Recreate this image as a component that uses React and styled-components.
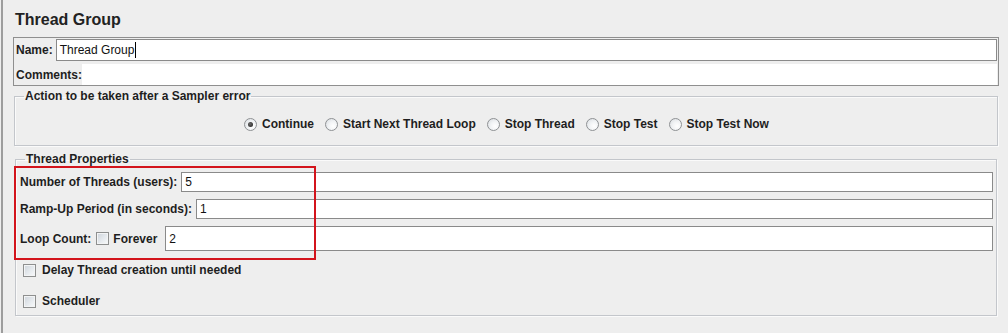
import React from 'react';
import styled, { createGlobalStyle } from 'styled-components';

const GlobalStyle = createGlobalStyle`
  html, body {
    margin: 0;
    height: 100%;
    background: #eeeeee;
  }
  body {
    font-family: "Liberation Sans", Arial, sans-serif;
    font-size: 12px;
    color: #1e1e1e;
  }
  #root { height: 100%; }
`;

const Page = styled.div`
  position: relative;
  box-sizing: border-box;
  height: 333px;
  margin-left: 1px;
  border-left: 2px solid #9d9d9d;
  padding: 10px 9px 0 10px;
  overflow: hidden;
`;

const Title = styled.h1`
  margin: 0 0 7px 2px;
  font-size: 16px;
  line-height: 20px;
  font-weight: 700;
  color: #222;
`;

const NameBox = styled.div`
  border: 1px solid #8f8f8f;
  padding: 1px 1px 0 1px;
  display: flex;
  flex-direction: column;
  gap: 3px;
`;

const Row = styled.div`
  display: flex;
  align-items: center;
  gap: ${p => p.$gap ?? 4}px;
  height: ${p => p.$h || 20}px;
`;

const Label = styled.span`
  font-weight: 700;
  white-space: nowrap;
  color: #1e1e1e;
  padding-left: ${p => p.$pad || 0}px;
`;

const Field = styled.div`
  flex: 1;
  align-self: stretch;
  box-sizing: border-box;
  display: flex;
  align-items: center;
  padding: 0 3px;
  margin-left: ${p => p.$offset || 0}px;
  background: #fff;
  border: ${p => (p.$bare ? 'none' : '1px solid #8a8a8a')};
  color: #111;
  white-space: nowrap;
`;

const Caret = styled.span`
  display: inline-block;
  width: 1px;
  height: 16px;
  margin-left: 1px;
  background: #000;
`;

const Group = styled.fieldset`
  margin: ${p => p.$top}px ${p => p.$side}px 0;
  padding: 0 3px 0 4px;
  border: 1px solid #c3c6cb;
  box-shadow: inset 1px 1px 0 #fafafa, 1px 1px 0 #fafafa;
  min-width: 0;
`;

const Legend = styled.legend`
  margin-left: 5px;
  padding: 0 1px;
  font-weight: 700;
  font-size: 12px;
  line-height: 14px;
  color: #1e1e1e;
`;

const RadioRow = styled.div`
  height: 42px;
  display: flex;
  align-items: center;
  justify-content: center;
  gap: 11px;
`;

const Choice = styled.label`
  display: flex;
  align-items: center;
  gap: ${p => p.$gap || 5}px;
  font-weight: 700;
  white-space: nowrap;
`;

const Radio = styled.span`
  position: relative;
  width: 13px;
  height: 13px;
  box-sizing: border-box;
  border-radius: 50%;
  border: 1px solid #8e9194;
  background: radial-gradient(circle at 65% 65%, #ffffff 0%, #f1f3f5 45%, #d6dade 100%);
  &::after {
    content: '';
    display: ${p => (p.$checked ? 'block' : 'none')};
    position: absolute;
    left: 3px;
    top: 3px;
    width: 5px;
    height: 5px;
    border-radius: 50%;
    background: radial-gradient(circle at 40% 40%, #6b6b6b, #1b1b1b);
  }
`;

const Check = styled.span`
  width: 13px;
  height: 13px;
  box-sizing: border-box;
  border: 1px solid #8e8f8f;
  box-shadow: inset 0 0 0 1px #f3f4f5;
  background: linear-gradient(135deg, #cdd3da 0%, #e6eaee 55%, #f9fafb 100%);
  flex-shrink: 0;
`;

const PropsBody = styled.div`
  display: flex;
  flex-direction: column;
  gap: 7px;
  padding-top: 6px;
`;

const Options = styled.div`
  display: flex;
  flex-direction: column;
  gap: 11px;
  margin-top: 9px;
  padding: 0 0 4px 3px;
`;

const OptionRow = styled.div`
  height: 20px;
  display: flex;
  align-items: center;
`;

const Highlight = styled.div`
  position: absolute;
  left: 11px;
  top: 166px;
  width: 302px;
  height: 94px;
  box-sizing: border-box;
  border: 2px solid #d3141c;
  pointer-events: none;
`;

const actions = ['Continue', 'Start Next Thread Loop', 'Stop Thread', 'Stop Test', 'Stop Test Now'];

export default function App() {
  return (
    <>
      <GlobalStyle />
      <Page>
        <Title>Thread Group</Title>
        <NameBox>
          <Row $h={22} $gap={3}>
            <Label $pad={1}>Name:</Label>
            <Field>
              Thread Group
              <Caret />
            </Field>
          </Row>
          <Row $h={21} $gap={0}>
            <Label $pad={1}>Comments:</Label>
            <Field $bare />
          </Row>
        </NameBox>

        <Group $top={3} $side={1}>
          <Legend>Action to be taken after a Sampler error</Legend>
          <RadioRow>
            {actions.map((a, i) => (
              <Choice key={a}>
                <Radio $checked={i === 0} />
                {a}
              </Choice>
            ))}
          </RadioRow>
        </Group>

        <Group $top={6} $side={2}>
          <Legend>Thread Properties</Legend>
          <PropsBody>
            <Row>
              <Label>Number of Threads (users):</Label>
              <Field>5</Field>
            </Row>
            <Row>
              <Label>Ramp-Up Period (in seconds):</Label>
              <Field>1</Field>
            </Row>
            <Row $h={25} $gap={5}>
              <Label>Loop Count:</Label>
              <Choice $gap={4}>
                <Check />
                Forever
              </Choice>
              <Field $offset={3}>2</Field>
            </Row>
          </PropsBody>
          <Options>
            <OptionRow>
              <Choice $gap={6}>
                <Check />
                Delay Thread creation until needed
              </Choice>
            </OptionRow>
            <OptionRow>
              <Choice $gap={6}>
                <Check />
                Scheduler
              </Choice>
            </OptionRow>
          </Options>
        </Group>

        <Highlight />
      </Page>
    </>
  );
}
